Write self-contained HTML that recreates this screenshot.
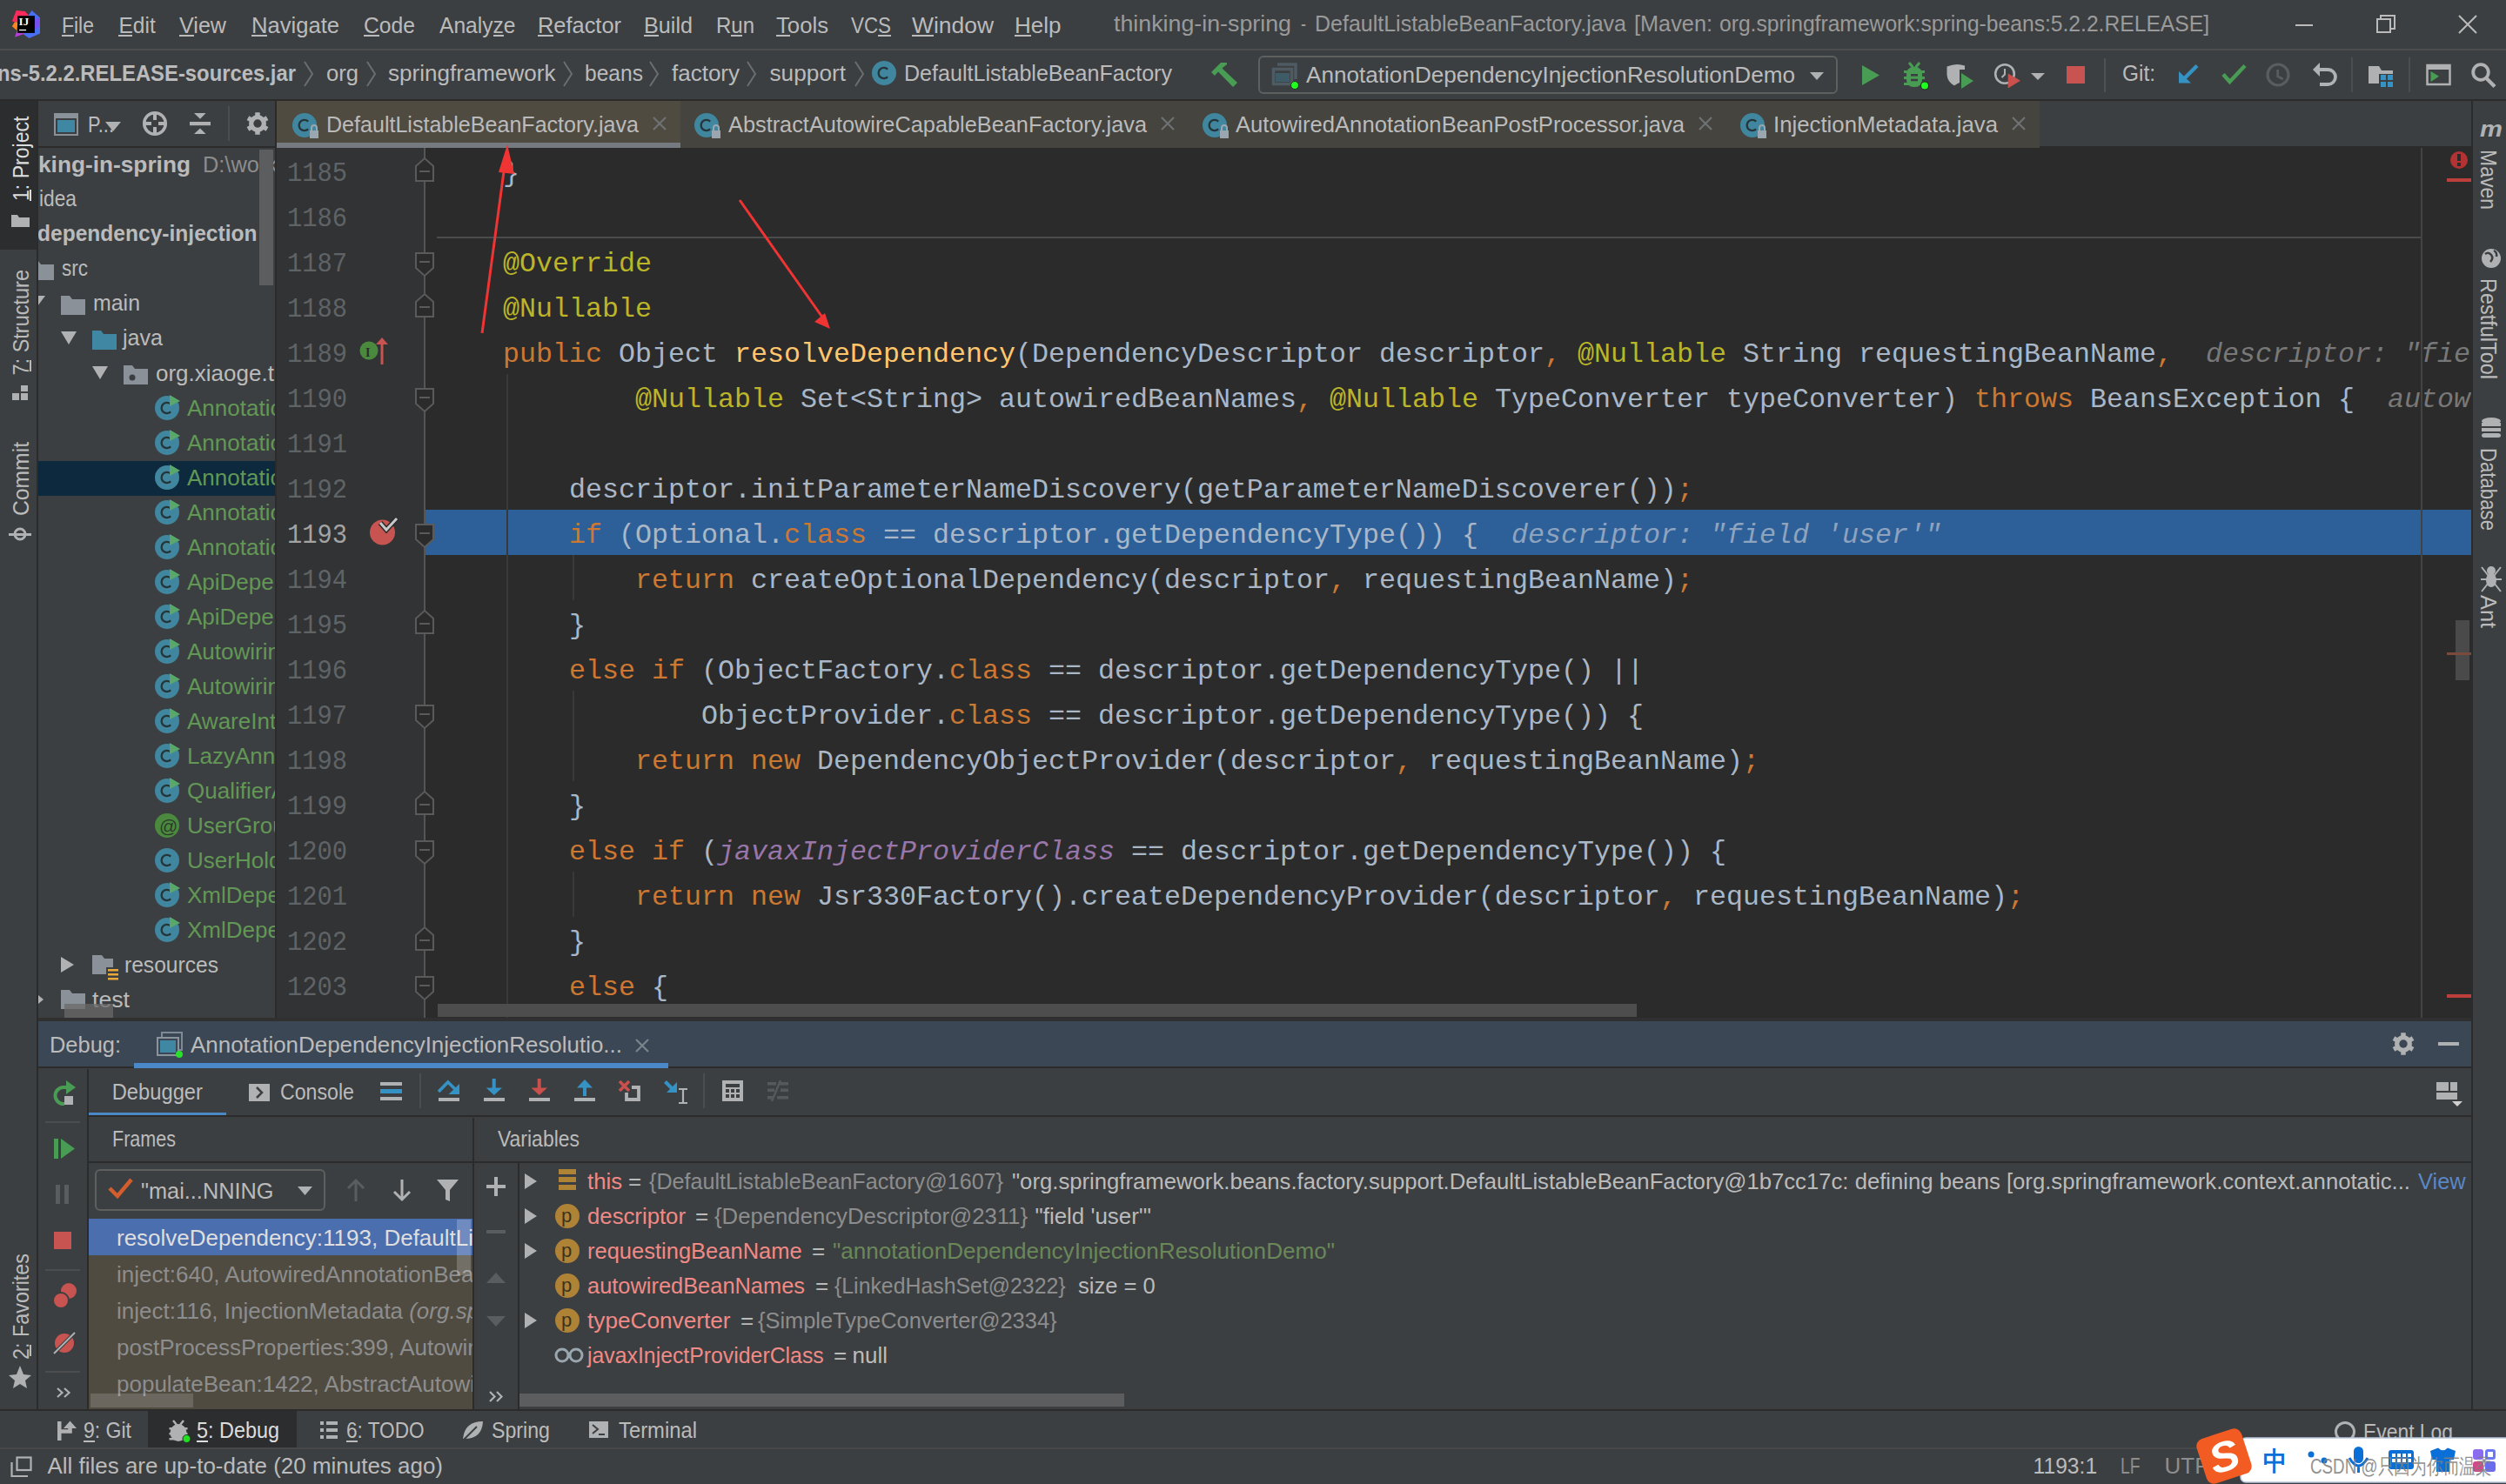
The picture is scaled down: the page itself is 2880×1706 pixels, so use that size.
<!DOCTYPE html>
<html><head><meta charset="utf-8"><style>
html,body{margin:0;padding:0;background:#3c3f41;overflow:hidden}
svg{display:block}
text{white-space:pre}
</style></head><body>
<svg width="2880" height="1706" viewBox="0 0 2880 1706" font-family="Liberation Sans, sans-serif">
<rect x="0" y="0" width="2880" height="1706" fill="#3c3f41" />
<line x1="0" y1="57" x2="2880" y2="57" stroke="#4b4d4f" stroke-width="2" />
<g>
<polygon points="18.7,11.9 28.8,13 33.2,17.9 19.9,25.6 13.9,24.4" fill="#fe2a5c"/>
<polygon points="13.9,30.3 16.9,25.3 20.5,25.6 19.3,35.1" fill="#fc851d"/>
<polygon points="16.9,42.8 19.9,34.2 29,38.6" fill="#b73fd9"/>
<polygon points="36.5,11.9 46,20.2 46,38.6 33.5,44 27,39.5 32.9,17.3" fill="#4a6ef0"/>
<polygon points="39,22 46,20.2 46,30 40,34" fill="#7650ee"/>
<rect x="20.2" y="18.2" width="19.7" height="19.7" fill="#000"/>
<text x="21.6" y="28.8" font-size="12" font-weight="bold" font-family="Liberation Serif" fill="#fff" textLength="11.6" lengthAdjust="spacingAndGlyphs">IJ</text>
<rect x="22.1" y="33.9" width="8" height="1.3" fill="#fff"/>
</g>
<text x="71" y="38" font-size="26" fill="#bbbbbb" textLength="37" lengthAdjust="spacingAndGlyphs" >File</text>
<rect x="71" y="40" width="14" height="2" fill="#bbbbbb" />
<text x="136.5" y="38" font-size="26" fill="#bbbbbb" textLength="42.2" lengthAdjust="spacingAndGlyphs" >Edit</text>
<rect x="136" y="40" width="16" height="2" fill="#bbbbbb" />
<text x="206" y="38" font-size="26" fill="#bbbbbb" textLength="54" lengthAdjust="spacingAndGlyphs" >View</text>
<rect x="206" y="40" width="17" height="2" fill="#bbbbbb" />
<text x="289" y="38" font-size="26" fill="#bbbbbb" textLength="101" lengthAdjust="spacingAndGlyphs" >Navigate</text>
<rect x="289" y="40" width="18" height="2" fill="#bbbbbb" />
<text x="418" y="38" font-size="26" fill="#bbbbbb" textLength="59" lengthAdjust="spacingAndGlyphs" >Code</text>
<rect x="418" y="40" width="18" height="2" fill="#bbbbbb" />
<text x="505" y="38" font-size="26" fill="#bbbbbb" textLength="87.5" lengthAdjust="spacingAndGlyphs" >Analyze</text>
<rect x="567" y="40" width="12" height="2" fill="#bbbbbb" />
<text x="618" y="38" font-size="26" fill="#bbbbbb" textLength="96" lengthAdjust="spacingAndGlyphs" >Refactor</text>
<rect x="618" y="40" width="18" height="2" fill="#bbbbbb" />
<text x="740" y="38" font-size="26" fill="#bbbbbb" textLength="56" lengthAdjust="spacingAndGlyphs" >Build</text>
<rect x="740" y="40" width="17" height="2" fill="#bbbbbb" />
<text x="823" y="38" font-size="26" fill="#bbbbbb" textLength="44" lengthAdjust="spacingAndGlyphs" >Run</text>
<rect x="840" y="40" width="13" height="2" fill="#bbbbbb" />
<text x="892" y="38" font-size="26" fill="#bbbbbb" textLength="60" lengthAdjust="spacingAndGlyphs" >Tools</text>
<rect x="892" y="40" width="16" height="2" fill="#bbbbbb" />
<text x="978" y="38" font-size="26" fill="#bbbbbb" textLength="46" lengthAdjust="spacingAndGlyphs" >VCS</text>
<rect x="1009" y="40" width="15" height="2" fill="#bbbbbb" />
<text x="1048" y="38" font-size="26" fill="#bbbbbb" textLength="94" lengthAdjust="spacingAndGlyphs" >Window</text>
<rect x="1048" y="40" width="25" height="2" fill="#bbbbbb" />
<text x="1166" y="38" font-size="26" fill="#bbbbbb" textLength="53.5" lengthAdjust="spacingAndGlyphs" >Help</text>
<rect x="1166" y="40" width="19" height="2" fill="#bbbbbb" />
<text x="1280" y="36" font-size="26" fill="#9a9a9a" textLength="204" lengthAdjust="spacingAndGlyphs" >thinking-in-spring</text>
<text x="1495" y="36" font-size="26" fill="#9a9a9a" textLength="6" lengthAdjust="spacingAndGlyphs" >-</text>
<text x="1511" y="36" font-size="26" fill="#9a9a9a" textLength="358" lengthAdjust="spacingAndGlyphs" >DefaultListableBeanFactory.java</text>
<text x="1878" y="36" font-size="26" fill="#9a9a9a" textLength="90" lengthAdjust="spacingAndGlyphs" >[Maven:</text>
<text x="1976" y="36" font-size="26" fill="#9a9a9a" textLength="563" lengthAdjust="spacingAndGlyphs" >org.springframework:spring-beans:5.2.2.RELEASE]</text>
<rect x="2638" y="28" width="20" height="2" fill="#bbbbbb" />
<rect x="2732" y="22" width="15" height="15" fill="none" stroke="#bbbbbb" stroke-width="2"/><path d="M2736,22 V18 H2752 V33 H2747" fill="none" stroke="#bbbbbb" stroke-width="2"/>
<path d="M2826,18 L2846,38 M2846,18 L2826,38" stroke="#bbbbbb" stroke-width="2"/>
<rect x="0" y="114" width="2880" height="2" fill="#2b2b2b" />
<text x="-3" y="93" font-size="26" fill="#bbbbbb" textLength="343" lengthAdjust="spacingAndGlyphs" font-weight="bold" >ns-5.2.2.RELEASE-sources.jar</text>
<path d="M350,71 L359,85 L350,99" fill="none" stroke="#6b6d6f" stroke-width="2"/>
<path d="M422,71 L431,85 L422,99" fill="none" stroke="#6b6d6f" stroke-width="2"/>
<path d="M648,71 L657,85 L648,99" fill="none" stroke="#6b6d6f" stroke-width="2"/>
<path d="M747,71 L756,85 L747,99" fill="none" stroke="#6b6d6f" stroke-width="2"/>
<path d="M859,71 L868,85 L859,99" fill="none" stroke="#6b6d6f" stroke-width="2"/>
<path d="M983,71 L992,85 L983,99" fill="none" stroke="#6b6d6f" stroke-width="2"/>
<text x="375" y="93" font-size="26" fill="#bbbbbb" textLength="37" lengthAdjust="spacingAndGlyphs" >org</text>
<text x="446" y="93" font-size="26" fill="#bbbbbb" textLength="192.5" lengthAdjust="spacingAndGlyphs" >springframework</text>
<text x="672" y="93" font-size="26" fill="#bbbbbb" textLength="67" lengthAdjust="spacingAndGlyphs" >beans</text>
<text x="772" y="93" font-size="26" fill="#bbbbbb" textLength="78" lengthAdjust="spacingAndGlyphs" >factory</text>
<text x="884.5" y="93" font-size="26" fill="#bbbbbb" textLength="87.5" lengthAdjust="spacingAndGlyphs" >support</text>
<circle cx="1016" cy="84" r="14" fill="#40869e"/>
<path d="M1020.2,79.6 A6.2,6.2 0 1 0 1020.2,88.4" fill="none" stroke="#26353a" stroke-width="2.3"/>
<text x="1039" y="93" font-size="26" fill="#bbbbbb" textLength="308" lengthAdjust="spacingAndGlyphs" >DefaultListableBeanFactory</text>
<polygon points="1392,83 1403,72 1410,72 1410,74 1404.5,78.5 1422,95 1417,100 1400,82.5 1396,87" fill="#499c54"/>
<rect x="1447" y="65" width="664" height="42" rx="5" fill="#3c3f41" stroke="#5e6060" stroke-width="2"/>
<path d="M1468,74 H1489 V91" fill="none" stroke="#4f5b62" stroke-width="3.5"/><rect x="1463.5" y="79.5" width="21" height="17" fill="none" stroke="#4f5b62" stroke-width="3.5"/><rect x="1466" y="84" width="16" height="10" fill="#3e5c68"/><circle cx="1488" cy="98" r="4.5" fill="#20ff20" stroke="#2b2b2b" stroke-width="1"/>
<text x="1501" y="95" font-size="26" fill="#bbbbbb" textLength="562" lengthAdjust="spacingAndGlyphs" >AnnotationDependencyInjectionResolutionDemo</text>
<polygon points="2080,83 2096,83 2088,92" fill="#aeb0b2"/>
<polygon points="2140,75 2160,86.5 2140,98" fill="#499c54"/>
<g fill="#499c54"><rect x="2191" y="77" width="18" height="23" rx="8"/><rect x="2188" y="81" width="24" height="3"/><rect x="2188" y="88" width="24" height="3"/><rect x="2188" y="95" width="24" height="3"/></g><g fill="#3c3f41"><rect x="2196" y="85" width="8" height="2.6"/><rect x="2196" y="90.7" width="8" height="2.6"/></g><path d="M2194,72 L2198.5,77.5 M2206,72 L2201.5,77.5" stroke="#499c54" stroke-width="3"/><circle cx="2212" cy="98.4" r="4.6" fill="#20ff20" stroke="#262626" stroke-width="1.2"/>
<path d="M2237.5,76.5 Q2248,72 2258,75.5 V80 H2252 V95 Q2246,98 2246,98.5 Q2238,94 2237.5,86 Z" fill="#afb1b3"/><polygon points="2254,84 2268,93 2254,102" fill="#499c54"/>
<circle cx="2304" cy="85" r="10.8" fill="none" stroke="#afb1b3" stroke-width="2.6"/><path d="M2304,79 V85.5 L2300.5,89" fill="none" stroke="#afb1b3" stroke-width="2"/><polygon points="2307.7,84.4 2322,92.8 2307.7,101.6" fill="#c9504c"/><polygon points="2334,84 2350,84 2342,92" fill="#afb1b3"/>
<rect x="2375" y="76" width="21" height="20" fill="#c75450" />
<rect x="2418" y="67" width="2" height="39" fill="#515151" />
<text x="2439" y="93" font-size="26" fill="#bbbbbb" textLength="38" lengthAdjust="spacingAndGlyphs" >Git:</text>
<path d="M2525,75.5 L2509,91.5" stroke="#3592c4" stroke-width="4.5"/><polygon points="2504,82 2504,95.5 2518,95.5" fill="#3592c4"/>
<path d="M2555,85.5 L2562.5,94 L2580,75.5" fill="none" stroke="#499c54" stroke-width="4.5"/>
<circle cx="2618" cy="86" r="12" fill="none" stroke="#5a5d5f" stroke-width="3.2"/><path d="M2617.6,80 V87.7 L2623.8,91" fill="none" stroke="#5a5d5f" stroke-width="2.6"/>
<path d="M2665,80 H2675.5 A8.5,8.5 0 0 1 2675.5,97 H2666" fill="none" stroke="#afb1b3" stroke-width="3.8"/><polygon points="2658,80 2666,72 2666,88" fill="#afb1b3"/>
<rect x="2702" y="66" width="2" height="40" fill="#4b4d4f" />
<path d="M2722,76 H2734 L2737,81 H2750 V96 H2722 Z" fill="#afb1b3"/><rect x="2734" y="85" width="17" height="16" fill="#3c3f41"/><g fill="#3592c4"><rect x="2736" y="86" width="6" height="6"/><rect x="2744" y="86" width="6" height="6"/><rect x="2736" y="94" width="6" height="6"/><rect x="2744" y="94" width="6" height="6"/></g>
<rect x="2768" y="66" width="2" height="40" fill="#4b4d4f" />
<rect x="2789.5" y="75" width="26" height="22" fill="none" stroke="#afb1b3" stroke-width="2.5"/><rect x="2789" y="74" width="27" height="6" fill="#afb1b3"/><polygon points="2793.5,82 2803,87.7 2793.5,94" fill="#499c54"/>
<circle cx="2851" cy="83" r="8.8" fill="none" stroke="#afb1b3" stroke-width="3.8"/><path d="M2857,89.5 L2867,99.5" stroke="#afb1b3" stroke-width="4.2"/>
<rect x="0" y="116" width="42" height="1504" fill="#3c3f41" />
<rect x="0" y="116" width="42" height="171" fill="#2b2d2f" />
<rect x="42" y="116" width="2" height="1504" fill="#2b2b2b" />
<text x="0" y="0" font-size="26" fill="#dddddd" textLength="97.5" lengthAdjust="spacingAndGlyphs" transform="translate(33,231) rotate(-90)">1: Project</text>
<rect x="34" y="218" width="2" height="13" fill="#dddddd" />
<path d="M13,247 H20 L22,250 H34 V261 H13 Z" fill="#afb1b3"/>
<text x="0" y="0" font-size="26" fill="#bbbbbb" textLength="121.5" lengthAdjust="spacingAndGlyphs" transform="translate(33,431.5) rotate(-90)">7: Structure</text>
<rect x="34" y="414" width="2" height="13" fill="#bbbbbb" />
<rect x="14" y="452" width="8" height="8" fill="#afb1b3"/><rect x="24" y="452" width="8" height="8" fill="#afb1b3"/><rect x="24" y="443" width="8" height="7" fill="#afb1b3"/>
<text x="0" y="0" font-size="26" fill="#bbbbbb" textLength="85" lengthAdjust="spacingAndGlyphs" transform="translate(33,593) rotate(-90)">Commit</text>
<circle cx="23" cy="614" r="6" fill="none" stroke="#afb1b3" stroke-width="3"/><rect x="10" y="613" width="26" height="3" fill="#afb1b3"/>
<text x="0" y="0" font-size="26" fill="#bbbbbb" textLength="122" lengthAdjust="spacingAndGlyphs" transform="translate(33,1563) rotate(-90)">2: Favorites</text>
<rect x="34" y="1546" width="2" height="13" fill="#bbbbbb" />
<polygon points="23,1570 27,1580 36,1581 29,1587 31,1596 23,1591 15,1596 17,1587 10,1581 19,1580" fill="#afb1b3"/>
<rect x="44" y="168" width="273" height="2" fill="#2b2b2b" />
<rect x="62" y="130" width="28" height="26" fill="#8a9199"/><rect x="64" y="136" width="24" height="18" fill="#3c3f41"/><rect x="66" y="138" width="20" height="14" fill="#3f87a3"/>
<text x="101" y="152" font-size="26" fill="#bbbbbb" textLength="30" lengthAdjust="spacingAndGlyphs" >P...</text>
<polygon points="121,140 139,140 130,151" fill="#afb1b3"/>
<circle cx="178" cy="142" r="12.3" fill="none" stroke="#afb1b3" stroke-width="3.5"/><path d="M178,130 V138 M178,146 V154 M166,142 H174 M182,142 H190" stroke="#afb1b3" stroke-width="4"/>
<polygon points="223,130 236.6,130 230,136.7" fill="#afb1b3"/><rect x="218" y="140" width="24" height="4.2" fill="#afb1b3"/><polygon points="223,154 236.6,154 230,147.5" fill="#afb1b3"/>
<rect x="262" y="122" width="2" height="40" fill="#4b4d4f" />
<polygon points="293.2,132.5 293.3,129.3 298.7,129.3 298.8,132.5 300.0,133.0 300.9,133.4 301.8,134.0 302.8,134.9 305.7,133.3 308.4,138.0 305.6,139.6 305.8,141.0 305.9,142.0 305.8,143.0 305.6,144.4 308.4,146.0 305.7,150.7 302.8,149.1 301.8,150.0 300.9,150.6 300.0,151.0 298.8,151.5 298.7,154.7 293.3,154.7 293.2,151.5 292.0,151.0 291.1,150.6 290.2,150.0 289.2,149.1 286.3,150.7 283.6,146.0 286.4,144.4 286.2,143.0 286.1,142.0 286.2,141.0 286.4,139.6 283.6,138.0 286.3,133.3 289.2,134.9 290.2,134.0 291.1,133.4 292.0,133.0" fill="#afb1b3"/><circle cx="296" cy="142" r="4.7" fill="#3c3f41"/>
<defs><clipPath id="projclip"><rect x="44" y="170" width="272" height="1001"/></clipPath></defs>
<g clip-path="url(#projclip)">
<rect x="44" y="530" width="272" height="40" fill="#0d293e" />
<text x="44" y="198" font-size="26" fill="#bbbbbb" textLength="175" lengthAdjust="spacingAndGlyphs" font-weight="bold" >king-in-spring</text>
<text x="233" y="198" font-size="26" fill="#8c8c8c" textLength="86" lengthAdjust="spacingAndGlyphs" >D:\work</text>
<rect x="38" y="219" width="6" height="18" fill="#c9803a"/>
<text x="45" y="237" font-size="26" fill="#bbbbbb" textLength="43" lengthAdjust="spacingAndGlyphs" >idea</text>
<text x="43" y="277" font-size="26" fill="#bbbbbb" textLength="252.5" lengthAdjust="spacingAndGlyphs" font-weight="bold" >dependency-injection</text>
<path d="M34,300 H44 L47,304 H62 V322 H34 Z" fill="#8a9199"/>
<text x="71" y="317" font-size="26" fill="#bbbbbb" textLength="30" lengthAdjust="spacingAndGlyphs" >src</text>
<polygon points="43,340 52,340 43,352" fill="#afb1b3"/>
<path d="M70,340 H80 L83,344 H98 V362 H70 Z" fill="#8a9199"/>
<text x="107" y="357" font-size="26" fill="#bbbbbb" textLength="54" lengthAdjust="spacingAndGlyphs" >main</text>
<polygon points="70,381 88,381 79,396" fill="#afb1b3"/>
<path d="M106,380 H116 L119,384 H134 V402 H106 Z" fill="#3f87a3"/>
<text x="141" y="397" font-size="26" fill="#bbbbbb" textLength="46" lengthAdjust="spacingAndGlyphs" >java</text>
<polygon points="106,421 124,421 115,436" fill="#afb1b3"/>
<path d="M142,420 H152 L155,424 H170 V442 H142 Z" fill="#8a9199"/>
<circle cx="152" cy="434" r="3.5" fill="#3c3f41"/>
<text x="179" y="438" font-size="26" fill="#bbbbbb" >org.xiaoge.thinking.in.spring</text>
<circle cx="192" cy="469" r="14" fill="#40869e"/>
<path d="M196.2,464.6 A6.2,6.2 0 1 0 196.2,473.4" fill="none" stroke="#26353a" stroke-width="2.3"/>
<polygon points="195,454 207,461 195,467" fill="#59a869"/>
<text x="215" y="478" font-size="26" fill="#629755" >AnnotationDependencyConstructorInjectionDemo</text>
<circle cx="192" cy="509" r="14" fill="#40869e"/>
<path d="M196.2,504.6 A6.2,6.2 0 1 0 196.2,513.4" fill="none" stroke="#26353a" stroke-width="2.3"/>
<polygon points="195,494 207,501 195,507" fill="#59a869"/>
<text x="215" y="518" font-size="26" fill="#629755" >AnnotationDependencyFieldInjectionDemo</text>
<circle cx="192" cy="549" r="14" fill="#40869e"/>
<path d="M196.2,544.6 A6.2,6.2 0 1 0 196.2,553.4" fill="none" stroke="#26353a" stroke-width="2.3"/>
<polygon points="195,534 207,541 195,547" fill="#59a869"/>
<text x="215" y="558" font-size="26" fill="#629755" >AnnotationDependencyInjectionResolutionDemo</text>
<circle cx="192" cy="589" r="14" fill="#40869e"/>
<path d="M196.2,584.6 A6.2,6.2 0 1 0 196.2,593.4" fill="none" stroke="#26353a" stroke-width="2.3"/>
<polygon points="195,574 207,581 195,587" fill="#59a869"/>
<text x="215" y="598" font-size="26" fill="#629755" >AnnotationDependencyMethodInjectionDemo</text>
<circle cx="192" cy="629" r="14" fill="#40869e"/>
<path d="M196.2,624.6 A6.2,6.2 0 1 0 196.2,633.4" fill="none" stroke="#26353a" stroke-width="2.3"/>
<polygon points="195,614 207,621 195,627" fill="#59a869"/>
<text x="215" y="638" font-size="26" fill="#629755" >AnnotationDependencySetterInjectionDemo</text>
<circle cx="192" cy="669" r="14" fill="#40869e"/>
<path d="M196.2,664.6 A6.2,6.2 0 1 0 196.2,673.4" fill="none" stroke="#26353a" stroke-width="2.3"/>
<polygon points="195,654 207,661 195,667" fill="#59a869"/>
<text x="215" y="678" font-size="26" fill="#629755" >ApiDependencyConstructorInjectionDemo</text>
<circle cx="192" cy="709" r="14" fill="#40869e"/>
<path d="M196.2,704.6 A6.2,6.2 0 1 0 196.2,713.4" fill="none" stroke="#26353a" stroke-width="2.3"/>
<polygon points="195,694 207,701 195,707" fill="#59a869"/>
<text x="215" y="718" font-size="26" fill="#629755" >ApiDependencySetterInjectionDemo</text>
<circle cx="192" cy="749" r="14" fill="#40869e"/>
<path d="M196.2,744.6 A6.2,6.2 0 1 0 196.2,753.4" fill="none" stroke="#26353a" stroke-width="2.3"/>
<polygon points="195,734 207,741 195,747" fill="#59a869"/>
<text x="215" y="758" font-size="26" fill="#629755" >AutowiringByNameDependencySetterInjectionDemo</text>
<circle cx="192" cy="789" r="14" fill="#40869e"/>
<path d="M196.2,784.6 A6.2,6.2 0 1 0 196.2,793.4" fill="none" stroke="#26353a" stroke-width="2.3"/>
<polygon points="195,774 207,781 195,787" fill="#59a869"/>
<text x="215" y="798" font-size="26" fill="#629755" >AutowiringConstructorDependencyConstructorInjectionDemo</text>
<circle cx="192" cy="829" r="14" fill="#40869e"/>
<path d="M196.2,824.6 A6.2,6.2 0 1 0 196.2,833.4" fill="none" stroke="#26353a" stroke-width="2.3"/>
<polygon points="195,814 207,821 195,827" fill="#59a869"/>
<text x="215" y="838" font-size="26" fill="#629755" >AwareInterfaceDependencyInjectionDemo</text>
<circle cx="192" cy="869" r="14" fill="#40869e"/>
<path d="M196.2,864.6 A6.2,6.2 0 1 0 196.2,873.4" fill="none" stroke="#26353a" stroke-width="2.3"/>
<polygon points="195,854 207,861 195,867" fill="#59a869"/>
<text x="215" y="878" font-size="26" fill="#629755" >LazyAnnotationDependencyInjectionDemo</text>
<circle cx="192" cy="909" r="14" fill="#40869e"/>
<path d="M196.2,904.6 A6.2,6.2 0 1 0 196.2,913.4" fill="none" stroke="#26353a" stroke-width="2.3"/>
<polygon points="195,894 207,901 195,907" fill="#59a869"/>
<text x="215" y="918" font-size="26" fill="#629755" >QualifierAnnotationDependencyInjectionDemo</text>
<circle cx="192" cy="949" r="14" fill="#4b8a3e"/><text x="183" y="957" font-size="21" fill="#2b3a2b">@</text>
<text x="215" y="958" font-size="26" fill="#629755" >UserGroup</text>
<circle cx="192" cy="989" r="14" fill="#40869e"/>
<path d="M196.2,984.6 A6.2,6.2 0 1 0 196.2,993.4" fill="none" stroke="#26353a" stroke-width="2.3"/>
<text x="215" y="998" font-size="26" fill="#629755" >UserHolder</text>
<circle cx="192" cy="1029" r="14" fill="#40869e"/>
<path d="M196.2,1024.6 A6.2,6.2 0 1 0 196.2,1033.4" fill="none" stroke="#26353a" stroke-width="2.3"/>
<polygon points="195,1014 207,1021 195,1027" fill="#59a869"/>
<text x="215" y="1038" font-size="26" fill="#629755" >XmlDependencyConstructorInjectionDemo</text>
<circle cx="192" cy="1069" r="14" fill="#40869e"/>
<path d="M196.2,1064.6 A6.2,6.2 0 1 0 196.2,1073.4" fill="none" stroke="#26353a" stroke-width="2.3"/>
<polygon points="195,1054 207,1061 195,1067" fill="#59a869"/>
<text x="215" y="1078" font-size="26" fill="#629755" >XmlDependencySetterInjectionDemo</text>
<polygon points="70,1100 85,1109 70,1118" fill="#afb1b3"/>
<path d="M106,1098 H117 L120,1102 H130 V1120 H106 Z" fill="#8a9199"/><rect x="122" y="1112" width="14" height="17" fill="#3c3f41"/><g fill="#e8a83a"><rect x="124" y="1114" width="12" height="2.5"/><rect x="124" y="1119" width="12" height="2.5"/><rect x="124" y="1124" width="12" height="2.5"/></g>
<text x="143" y="1118" font-size="26" fill="#bbbbbb" textLength="108" lengthAdjust="spacingAndGlyphs" >resources</text>
<polygon points="44,1144 50,1149 44,1154" fill="#afb1b3"/>
<path d="M70,1138 H80 L83,1142 H98 V1160 H70 Z" fill="#8a9199"/>
<text x="106" y="1158" font-size="26" fill="#bbbbbb" textLength="43" lengthAdjust="spacingAndGlyphs" >test</text>
<rect x="74" y="1154" width="56" height="16" fill="#6a6a6a" opacity="0.75"/>
<rect x="298" y="172" width="16" height="156" fill="#5b5d5f" />
</g>
<rect x="44" y="1170" width="273" height="1.5" fill="#4b473c" />
<rect x="316" y="116" width="2" height="1056" fill="#2b2b2b" />
<rect x="318" y="116" width="2026" height="54" fill="#45443e" />
<rect x="318" y="116" width="464" height="54" fill="#4f4b41" />
<rect x="318" y="164" width="464" height="6" fill="#747a80" />
<rect x="2344" y="116" width="496" height="52" fill="#3c3f41" />
<rect x="2344" y="168" width="496" height="2" fill="#2b2b2b" />
<circle cx="350" cy="144" r="14" fill="#40869e"/>
<path d="M354.2,139.6 A6.2,6.2 0 1 0 354.2,148.4" fill="none" stroke="#26353a" stroke-width="2.3"/>
<rect x="356" y="150" width="10" height="9" fill="#9aa7b0"/><path d="M358,151 v-4 a3,3 0 0 1 6,0 v4" fill="none" stroke="#9aa7b0" stroke-width="2"/>
<text x="375" y="152" font-size="26" fill="#bbbbbb" textLength="359" lengthAdjust="spacingAndGlyphs" >DefaultListableBeanFactory.java</text>
<path d="M751,135 L765,149 M765,135 L751,149" stroke="#6e7274" stroke-width="2.2"/>
<circle cx="812" cy="144" r="14" fill="#40869e"/>
<path d="M816.2,139.6 A6.2,6.2 0 1 0 816.2,148.4" fill="none" stroke="#26353a" stroke-width="2.3"/>
<rect x="818" y="150" width="10" height="9" fill="#9aa7b0"/><path d="M820,151 v-4 a3,3 0 0 1 6,0 v4" fill="none" stroke="#9aa7b0" stroke-width="2"/>
<text x="837" y="152" font-size="26" fill="#bbbbbb" textLength="481" lengthAdjust="spacingAndGlyphs" >AbstractAutowireCapableBeanFactory.java</text>
<path d="M1335,135 L1349,149 M1349,135 L1335,149" stroke="#6e7274" stroke-width="2.2"/>
<circle cx="1396" cy="144" r="14" fill="#40869e"/>
<path d="M1400.2,139.6 A6.2,6.2 0 1 0 1400.2,148.4" fill="none" stroke="#26353a" stroke-width="2.3"/>
<rect x="1402" y="150" width="10" height="9" fill="#9aa7b0"/><path d="M1404,151 v-4 a3,3 0 0 1 6,0 v4" fill="none" stroke="#9aa7b0" stroke-width="2"/>
<text x="1420" y="152" font-size="26" fill="#bbbbbb" textLength="516" lengthAdjust="spacingAndGlyphs" >AutowiredAnnotationBeanPostProcessor.java</text>
<path d="M1953,135 L1967,149 M1967,135 L1953,149" stroke="#6e7274" stroke-width="2.2"/>
<circle cx="2014" cy="144" r="14" fill="#40869e"/>
<path d="M2018.2,139.6 A6.2,6.2 0 1 0 2018.2,148.4" fill="none" stroke="#26353a" stroke-width="2.3"/>
<rect x="2020" y="150" width="10" height="9" fill="#9aa7b0"/><path d="M2022,151 v-4 a3,3 0 0 1 6,0 v4" fill="none" stroke="#9aa7b0" stroke-width="2"/>
<text x="2038" y="152" font-size="26" fill="#bbbbbb" textLength="258" lengthAdjust="spacingAndGlyphs" >InjectionMetadata.java</text>
<path d="M2313,135 L2327,149 M2327,135 L2313,149" stroke="#6e7274" stroke-width="2.2"/>
<rect x="318" y="170" width="170" height="1001" fill="#313335" />
<rect x="488" y="170" width="2352" height="1001" fill="#2b2b2b" />
<rect x="489" y="586" width="2351" height="52" fill="#2d5f99" />
<rect x="502" y="272" width="2281" height="2" fill="#4b4b4b" />
<rect x="2782" y="170" width="2" height="1001" fill="#434343" />
<rect x="582" y="430" width="2" height="741" fill="#393939" />
<rect x="658" y="638" width="2" height="52" fill="#393939" />
<rect x="658" y="794" width="2" height="104" fill="#393939" />
<rect x="658" y="1002" width="2" height="52" fill="#393939" />
<rect x="487" y="170" width="2" height="1001" fill="#555555" />
<text x="330" y="208" font-size="31.66" fill="#606366" font-family="Liberation Mono" textLength="69" lengthAdjust="spacingAndGlyphs" >1185</text>
<text x="330" y="260" font-size="31.66" fill="#606366" font-family="Liberation Mono" textLength="69" lengthAdjust="spacingAndGlyphs" >1186</text>
<text x="330" y="312" font-size="31.66" fill="#606366" font-family="Liberation Mono" textLength="69" lengthAdjust="spacingAndGlyphs" >1187</text>
<text x="330" y="364" font-size="31.66" fill="#606366" font-family="Liberation Mono" textLength="69" lengthAdjust="spacingAndGlyphs" >1188</text>
<text x="330" y="416" font-size="31.66" fill="#606366" font-family="Liberation Mono" textLength="69" lengthAdjust="spacingAndGlyphs" >1189</text>
<text x="330" y="468" font-size="31.66" fill="#606366" font-family="Liberation Mono" textLength="69" lengthAdjust="spacingAndGlyphs" >1190</text>
<text x="330" y="520" font-size="31.66" fill="#606366" font-family="Liberation Mono" textLength="69" lengthAdjust="spacingAndGlyphs" >1191</text>
<text x="330" y="572" font-size="31.66" fill="#606366" font-family="Liberation Mono" textLength="69" lengthAdjust="spacingAndGlyphs" >1192</text>
<text x="330" y="624" font-size="31.66" fill="#a4a3a3" font-family="Liberation Mono" textLength="69" lengthAdjust="spacingAndGlyphs" >1193</text>
<text x="330" y="676" font-size="31.66" fill="#606366" font-family="Liberation Mono" textLength="69" lengthAdjust="spacingAndGlyphs" >1194</text>
<text x="330" y="728" font-size="31.66" fill="#606366" font-family="Liberation Mono" textLength="69" lengthAdjust="spacingAndGlyphs" >1195</text>
<text x="330" y="780" font-size="31.66" fill="#606366" font-family="Liberation Mono" textLength="69" lengthAdjust="spacingAndGlyphs" >1196</text>
<text x="330" y="832" font-size="31.66" fill="#606366" font-family="Liberation Mono" textLength="69" lengthAdjust="spacingAndGlyphs" >1197</text>
<text x="330" y="884" font-size="31.66" fill="#606366" font-family="Liberation Mono" textLength="69" lengthAdjust="spacingAndGlyphs" >1198</text>
<text x="330" y="936" font-size="31.66" fill="#606366" font-family="Liberation Mono" textLength="69" lengthAdjust="spacingAndGlyphs" >1199</text>
<text x="330" y="988" font-size="31.66" fill="#606366" font-family="Liberation Mono" textLength="69" lengthAdjust="spacingAndGlyphs" >1200</text>
<text x="330" y="1040" font-size="31.66" fill="#606366" font-family="Liberation Mono" textLength="69" lengthAdjust="spacingAndGlyphs" >1201</text>
<text x="330" y="1092" font-size="31.66" fill="#606366" font-family="Liberation Mono" textLength="69" lengthAdjust="spacingAndGlyphs" >1202</text>
<text x="330" y="1144" font-size="31.66" fill="#606366" font-family="Liberation Mono" textLength="69" lengthAdjust="spacingAndGlyphs" >1203</text>
<path d="M478,208 V191 L488,182 L498,191 V208 Z" fill="#2b2b2b" stroke="#5a5a5a" stroke-width="2"/><rect x="482" y="196" width="12" height="2" fill="#5a5a5a"/>
<path d="M478,364 V347 L488,338 L498,347 V364 Z" fill="#2b2b2b" stroke="#5a5a5a" stroke-width="2"/><rect x="482" y="352" width="12" height="2" fill="#5a5a5a"/>
<path d="M478,728 V711 L488,702 L498,711 V728 Z" fill="#2b2b2b" stroke="#5a5a5a" stroke-width="2"/><rect x="482" y="716" width="12" height="2" fill="#5a5a5a"/>
<path d="M478,936 V919 L488,910 L498,919 V936 Z" fill="#2b2b2b" stroke="#5a5a5a" stroke-width="2"/><rect x="482" y="924" width="12" height="2" fill="#5a5a5a"/>
<path d="M478,1092 V1075 L488,1066 L498,1075 V1092 Z" fill="#2b2b2b" stroke="#5a5a5a" stroke-width="2"/><rect x="482" y="1080" width="12" height="2" fill="#5a5a5a"/>
<path d="M478,291 V308 L488,317 L498,308 V291 Z" fill="#2b2b2b" stroke="#5a5a5a" stroke-width="2"/><rect x="482" y="300" width="12" height="2" fill="#5a5a5a"/>
<path d="M478,447 V464 L488,473 L498,464 V447 Z" fill="#2b2b2b" stroke="#5a5a5a" stroke-width="2"/><rect x="482" y="456" width="12" height="2" fill="#5a5a5a"/>
<path d="M478,603 V620 L488,629 L498,620 V603 Z" fill="#2b2b2b" stroke="#5a5a5a" stroke-width="2"/><rect x="482" y="612" width="12" height="2" fill="#5a5a5a"/>
<path d="M478,811 V828 L488,837 L498,828 V811 Z" fill="#2b2b2b" stroke="#5a5a5a" stroke-width="2"/><rect x="482" y="820" width="12" height="2" fill="#5a5a5a"/>
<path d="M478,967 V984 L488,993 L498,984 V967 Z" fill="#2b2b2b" stroke="#5a5a5a" stroke-width="2"/><rect x="482" y="976" width="12" height="2" fill="#5a5a5a"/>
<path d="M478,1123 V1140 L488,1149 L498,1140 V1123 Z" fill="#2b2b2b" stroke="#5a5a5a" stroke-width="2"/><rect x="482" y="1132" width="12" height="2" fill="#5a5a5a"/>
<circle cx="424" cy="403" r="10.5" fill="#4b8a3e"/><text x="420" y="410" font-size="14" font-weight="bold" fill="#2b2b2b" font-family="Liberation Serif">I</text>
<path d="M439,419 V394" stroke="#c75450" stroke-width="3"/><polygon points="432,396 439,388 446,396" fill="#c75450"/>
<circle cx="439.5" cy="612" r="14.5" fill="#c75450"/><path d="M437,601 L444,609 L456,596" fill="none" stroke="#2b2b2b" stroke-width="6"/><path d="M437,601 L444,609 L456,596" fill="none" stroke="#c8c8c8" stroke-width="3"/>
<defs><clipPath id="edclip"><rect x="489" y="170" width="2351" height="1001"/></clipPath></defs>
<g clip-path="url(#edclip)" font-family="Liberation Mono" font-size="31.66">
<text x="578" y="208" fill="#a9b7c6" font-family="Liberation Mono">}</text>
<text x="578" y="312" fill="#bbb529" font-family="Liberation Mono">@Override</text>
<text x="578" y="364" fill="#bbb529" font-family="Liberation Mono">@Nullable</text>
<text x="578" y="416" fill="#cc7832" font-family="Liberation Mono">public </text>
<text x="711" y="416" fill="#a9b7c6" font-family="Liberation Mono">Object </text>
<text x="844" y="416" fill="#ffc66d" font-family="Liberation Mono">resolveDependency</text>
<text x="1167" y="416" fill="#a9b7c6" font-family="Liberation Mono">(DependencyDescriptor descriptor</text>
<text x="1775" y="416" fill="#cc7832" font-family="Liberation Mono">,</text>
<text x="1813" y="416" fill="#bbb529" font-family="Liberation Mono">@Nullable</text>
<text x="2003" y="416" fill="#a9b7c6" font-family="Liberation Mono">String requestingBeanName</text>
<text x="2478" y="416" fill="#cc7832" font-family="Liberation Mono">,</text>
<text x="2535" y="416" fill="#787878" font-style="italic" font-family="Liberation Mono">descriptor: &quot;fie</text>
<text x="730" y="468" fill="#bbb529" font-family="Liberation Mono">@Nullable</text>
<text x="920" y="468" fill="#a9b7c6" font-family="Liberation Mono">Set&lt;String&gt; autowiredBeanNames</text>
<text x="1490" y="468" fill="#cc7832" font-family="Liberation Mono">,</text>
<text x="1528" y="468" fill="#bbb529" font-family="Liberation Mono">@Nullable</text>
<text x="1718" y="468" fill="#a9b7c6" font-family="Liberation Mono">TypeConverter typeConverter) </text>
<text x="2269" y="468" fill="#cc7832" font-family="Liberation Mono">throws</text>
<text x="2402" y="468" fill="#a9b7c6" font-family="Liberation Mono">BeansException {</text>
<text x="2744" y="468" fill="#787878" font-style="italic" font-family="Liberation Mono">autow</text>
<text x="654" y="572" fill="#a9b7c6" font-family="Liberation Mono">descriptor.initParameterNameDiscovery(getParameterNameDiscoverer())</text>
<text x="1927" y="572" fill="#cc7832" font-family="Liberation Mono">;</text>
<text x="654" y="624" fill="#cc7832" font-family="Liberation Mono">if</text>
<text x="711" y="624" fill="#a9b7c6" font-family="Liberation Mono">(Optional.</text>
<text x="901" y="624" fill="#cc7832" font-family="Liberation Mono">class</text>
<text x="1015" y="624" fill="#a9b7c6" font-family="Liberation Mono">== descriptor.getDependencyType()) {</text>
<text x="1737" y="624" fill="#8ea3be" font-style="italic" font-family="Liberation Mono">descriptor: &quot;field &#x27;user&#x27;&quot;</text>
<text x="730" y="676" fill="#cc7832" font-family="Liberation Mono">return</text>
<text x="863" y="676" fill="#a9b7c6" font-family="Liberation Mono">createOptionalDependency(descriptor</text>
<text x="1528" y="676" fill="#cc7832" font-family="Liberation Mono">,</text>
<text x="1566" y="676" fill="#a9b7c6" font-family="Liberation Mono">requestingBeanName)</text>
<text x="1927" y="676" fill="#cc7832" font-family="Liberation Mono">;</text>
<text x="654" y="728" fill="#a9b7c6" font-family="Liberation Mono">}</text>
<text x="654" y="780" fill="#cc7832" font-family="Liberation Mono">else if</text>
<text x="806" y="780" fill="#a9b7c6" font-family="Liberation Mono">(ObjectFactory.</text>
<text x="1091" y="780" fill="#cc7832" font-family="Liberation Mono">class</text>
<text x="1205" y="780" fill="#a9b7c6" font-family="Liberation Mono">== descriptor.getDependencyType() ||</text>
<text x="806" y="832" fill="#a9b7c6" font-family="Liberation Mono">ObjectProvider.</text>
<text x="1091" y="832" fill="#cc7832" font-family="Liberation Mono">class</text>
<text x="1205" y="832" fill="#a9b7c6" font-family="Liberation Mono">== descriptor.getDependencyType()) {</text>
<text x="730" y="884" fill="#cc7832" font-family="Liberation Mono">return new</text>
<text x="939" y="884" fill="#a9b7c6" font-family="Liberation Mono">DependencyObjectProvider(descriptor</text>
<text x="1604" y="884" fill="#cc7832" font-family="Liberation Mono">,</text>
<text x="1642" y="884" fill="#a9b7c6" font-family="Liberation Mono">requestingBeanName)</text>
<text x="2003" y="884" fill="#cc7832" font-family="Liberation Mono">;</text>
<text x="654" y="936" fill="#a9b7c6" font-family="Liberation Mono">}</text>
<text x="654" y="988" fill="#cc7832" font-family="Liberation Mono">else if</text>
<text x="806" y="988" fill="#a9b7c6" font-family="Liberation Mono">(</text>
<text x="825" y="988" fill="#9876aa" font-style="italic" font-family="Liberation Mono">javaxInjectProviderClass</text>
<text x="1300" y="988" fill="#a9b7c6" font-family="Liberation Mono">== descriptor.getDependencyType()) {</text>
<text x="730" y="1040" fill="#cc7832" font-family="Liberation Mono">return new</text>
<text x="939" y="1040" fill="#a9b7c6" font-family="Liberation Mono">Jsr330Factory().createDependencyProvider(descriptor</text>
<text x="1908" y="1040" fill="#cc7832" font-family="Liberation Mono">,</text>
<text x="1946" y="1040" fill="#a9b7c6" font-family="Liberation Mono">requestingBeanName)</text>
<text x="2307" y="1040" fill="#cc7832" font-family="Liberation Mono">;</text>
<text x="654" y="1092" fill="#a9b7c6" font-family="Liberation Mono">}</text>
<text x="654" y="1144" fill="#cc7832" font-family="Liberation Mono">else</text>
<text x="749" y="1144" fill="#a9b7c6" font-family="Liberation Mono">{</text>
<text x="730" y="1196" fill="#a9b7c6" font-family="Liberation Mono">return doResolveDependency(descriptor, requestingBeanName, autowiredBeanNames, typeConverter);</text>
</g>
<rect x="503" y="1154" width="1378" height="15" fill="#4d4d4d" />
<rect x="2822" y="713" width="16" height="69" fill="#4a4a4a" />
<rect x="2812" y="750" width="28" height="3" fill="#7a4a3a" />
<circle cx="2826" cy="184" r="10" fill="#b33232"/><rect x="2824" y="177" width="4" height="8" fill="#2b2b2b"/><rect x="2824" y="187" width="4" height="4" fill="#2b2b2b"/>
<rect x="2812" y="205" width="28" height="4" fill="#bc3f3c" />
<rect x="2812" y="1143" width="28" height="4" fill="#bc3f3c" />
<rect x="2840" y="116" width="2" height="1504" fill="#2b2b2b" />
<rect x="2842" y="116" width="38" height="1504" fill="#3c3f41" />
<text x="2850" y="157" font-size="26" font-weight="bold" font-style="italic" fill="#afb1b3" textLength="26" lengthAdjust="spacingAndGlyphs">m</text>
<text x="0" y="0" font-size="26" fill="#bbbbbb" textLength="69" lengthAdjust="spacingAndGlyphs" transform="translate(2851,172) rotate(90)">Maven</text>
<circle cx="2863" cy="297" r="11" fill="#afb1b3"/><path d="M2856,292 q4,-3 7,1 q3,4 -1,8 M2866,288 q4,2 3,7" fill="none" stroke="#3c3f41" stroke-width="2.5"/>
<text x="0" y="0" font-size="26" fill="#bbbbbb" textLength="116" lengthAdjust="spacingAndGlyphs" transform="translate(2851,320) rotate(90)">RestfulTool</text>
<g fill="#afb1b3"><ellipse cx="2863" cy="484" rx="11" ry="4"/><rect x="2852" y="486" width="22" height="4"/><rect x="2852" y="492" width="22" height="4"/><rect x="2852" y="498" width="22" height="5" rx="3"/></g>
<text x="0" y="0" font-size="26" fill="#bbbbbb" textLength="95" lengthAdjust="spacingAndGlyphs" transform="translate(2851,515) rotate(90)">Database</text>
<g fill="#afb1b3"><circle cx="2863" cy="656" r="5"/><ellipse cx="2863" cy="667" rx="6" ry="8"/><path d="M2852,652 L2874,680 M2874,652 L2852,680 M2851,666 H2875" stroke="#afb1b3" stroke-width="2"/></g>
<text x="0" y="0" font-size="26" fill="#bbbbbb" textLength="38" lengthAdjust="spacingAndGlyphs" transform="translate(2851,684) rotate(90)">Ant</text>
<path d="M554,383 L580,190" stroke="#f03333" stroke-width="3"/><polygon points="573,198 583,166 591,200" fill="#f03333"/>
<path d="M850,230 L946,366" stroke="#f03333" stroke-width="3"/><polygon points="936,370 954,378 948,360" fill="#f03333"/>
<rect x="44" y="1170" width="2796" height="4" fill="#303030" />
<rect x="44" y="1174" width="2796" height="52" fill="#3b4754" />
<text x="57" y="1210" font-size="26" fill="#bbbbbb" textLength="82" lengthAdjust="spacingAndGlyphs" >Debug:</text>
<rect x="186" y="1187" width="23" height="20" fill="none" stroke="#7f8a94" stroke-width="2"/><rect x="181" y="1193" width="24" height="20" fill="#3b4754" stroke="#8a949c" stroke-width="2"/><rect x="184" y="1196" width="18" height="14" fill="#3f87a3"/><circle cx="206" cy="1212" r="4" fill="#29e02a"/>
<text x="219" y="1210" font-size="26" fill="#bbbbbb" textLength="496" lengthAdjust="spacingAndGlyphs" >AnnotationDependencyInjectionResolutio...</text>
<path d="M731,1195 L745,1209 M745,1195 L731,1209" stroke="#7a848c" stroke-width="2.2"/>
<rect x="44" y="1226" width="2796" height="2" fill="#2b2b2b" />
<rect x="154" y="1222" width="614" height="6" fill="#4a88c7" />
<polygon points="2759.2,1190.5 2759.3,1187.3 2764.7,1187.3 2764.8,1190.5 2766.0,1191.0 2766.9,1191.4 2767.8,1192.0 2768.8,1192.9 2771.7,1191.3 2774.4,1196.0 2771.6,1197.6 2771.8,1199.0 2771.9,1200.0 2771.8,1201.0 2771.6,1202.4 2774.4,1204.0 2771.7,1208.7 2768.8,1207.1 2767.8,1208.0 2766.9,1208.6 2766.0,1209.0 2764.8,1209.5 2764.7,1212.7 2759.3,1212.7 2759.2,1209.5 2758.0,1209.0 2757.1,1208.6 2756.2,1208.0 2755.2,1207.1 2752.3,1208.7 2749.6,1204.0 2752.4,1202.4 2752.2,1201.0 2752.1,1200.0 2752.2,1199.0 2752.4,1197.6 2749.6,1196.0 2752.3,1191.3 2755.2,1192.9 2756.2,1192.0 2757.1,1191.4 2758.0,1191.0" fill="#afb1b3"/><circle cx="2762" cy="1200" r="4.7" fill="#3b4754"/>
<rect x="2802" y="1198" width="24" height="4" fill="#afb1b3" />
<rect x="100" y="1229" width="2" height="391" fill="#2b2b2b" />
<path d="M78,1250 H73 A9.5,9.5 0 0 0 73,1269 H74" fill="none" stroke="#499c54" stroke-width="4"/><polygon points="76,1242 87,1250 76,1258" fill="#499c54"/><rect x="74" y="1260" width="10" height="10" fill="#afb1b3"/>
<rect x="52" y="1289" width="40" height="2" fill="#4b4d4f" />
<rect x="62" y="1309" width="5" height="23" fill="#499c54"/><polygon points="70,1309 86,1320.5 70,1332" fill="#499c54"/>
<rect x="64" y="1362" width="5" height="22" fill="#5a5d5f"/><rect x="74" y="1362" width="5" height="22" fill="#5a5d5f"/>
<rect x="62" y="1416" width="20" height="20" fill="#c75450" />
<rect x="52" y="1459" width="40" height="2" fill="#4b4d4f" />
<circle cx="79" cy="1484" r="9" fill="#c75450"/><circle cx="70" cy="1495" r="9" fill="#c75450" stroke="#3c3f41" stroke-width="2"/>
<circle cx="74" cy="1544" r="11" fill="#c75450"/><path d="M60,1558 L88,1530" stroke="#3c3f41" stroke-width="4"/><path d="M62,1556 L86,1532" stroke="#afb1b3" stroke-width="2"/>
<rect x="52" y="1576" width="40" height="2" fill="#4b4d4f" />
<path d="M66,1596 L71.5,1601 L66,1606 M74,1596 L79.5,1601 L74,1606" fill="none" stroke="#afb1b3" stroke-width="2.2"/>
<text x="128.7" y="1264" font-size="26" fill="#bbbbbb" textLength="104.3" lengthAdjust="spacingAndGlyphs" >Debugger</text>
<rect x="102" y="1279" width="158" height="4" fill="#4a88c7" />
<rect x="286" y="1246" width="24" height="20" fill="#afb1b3"/><path d="M295,1250 L301,1256 L295,1262" fill="none" stroke="#3c3f41" stroke-width="2.5"/>
<text x="322" y="1264" font-size="26" fill="#bbbbbb" textLength="85" lengthAdjust="spacingAndGlyphs" >Console</text>
<rect x="437" y="1244" width="25" height="4" fill="#afb1b3"/><rect x="437" y="1252" width="25" height="5" fill="#3592c4"/><rect x="437" y="1261" width="25" height="4" fill="#afb1b3"/>
<rect x="482" y="1234" width="2" height="40" fill="#4b4d4f" />
<path d="M504,1255 L514.8,1244 L523,1252" fill="none" stroke="#3592c4" stroke-width="3.6"/><polygon points="515.5,1258 528,1258 528,1246" fill="#3592c4"/><rect x="504" y="1262" width="24" height="4" fill="#afb1b3"/>
<rect x="565.7" y="1240" width="4" height="12" fill="#3592c4"/><polygon points="558.7,1250.4 577,1250.4 567.8,1259" fill="#3592c4"/><rect x="556" y="1262" width="24" height="4" fill="#afb1b3"/>
<rect x="617.7" y="1240" width="4" height="12" fill="#c9504c"/><polygon points="610.5,1250.4 629,1250.4 619.7,1259" fill="#c9504c"/><rect x="608" y="1262" width="24" height="4" fill="#afb1b3"/>
<rect x="670" y="1250" width="4" height="10" fill="#3592c4"/><polygon points="663,1250.4 681,1250.4 672,1241" fill="#3592c4"/><rect x="660" y="1262" width="24" height="4" fill="#afb1b3"/>
<path d="M712,1243 L723,1254 M723,1243 L712,1254" stroke="#c9504c" stroke-width="3.6"/><path d="M726,1250 H734 V1264 H720 V1256" fill="none" stroke="#afb1b3" stroke-width="3.8"/>
<path d="M764.5,1243.5 L773,1252" stroke="#3592c4" stroke-width="4"/><polygon points="766,1256 778,1256 778,1244" fill="#3592c4"/><path d="M780,1252 H790 M785,1252 V1268 M780,1268 H790" stroke="#afb1b3" stroke-width="2.2"/>
<rect x="808" y="1234" width="2" height="40" fill="#4b4d4f" />
<rect x="830" y="1242" width="24" height="24" fill="#afb1b3"/><g fill="#3c3f41"><rect x="834" y="1246" width="16" height="4"/><rect x="834" y="1252" width="4" height="4"/><rect x="840" y="1252" width="4" height="4"/><rect x="846" y="1252" width="4" height="4"/><rect x="834" y="1258" width="4" height="4"/><rect x="840" y="1258" width="4" height="4"/><rect x="846" y="1258" width="4" height="4"/></g>
<g fill="#56595b"><rect x="882" y="1244" width="10" height="3.6"/><rect x="895" y="1244" width="11" height="3.6"/><rect x="882" y="1251.5" width="8" height="3.6"/><rect x="897" y="1251.5" width="9" height="3.6"/><rect x="882" y="1260" width="6" height="3.6"/><rect x="893" y="1260" width="13" height="3.6"/></g><path d="M887,1266 L897,1242" stroke="#56595b" stroke-width="2.5"/>
<rect x="2800" y="1244" width="14" height="10" fill="#afb1b3"/><rect x="2816" y="1244" width="8" height="10" fill="#afb1b3"/><rect x="2800" y="1256" width="24" height="8" fill="#afb1b3"/><polygon points="2818,1266 2830,1266 2824,1272" fill="#d0d0d0"/>
<rect x="102" y="1282" width="2738" height="2" fill="#2b2b2b" />
<text x="129" y="1318" font-size="26" fill="#bbbbbb" textLength="73" lengthAdjust="spacingAndGlyphs" >Frames</text>
<rect x="543" y="1285" width="2" height="335" fill="#2b2b2b" />
<text x="572" y="1318" font-size="26" fill="#bbbbbb" textLength="94" lengthAdjust="spacingAndGlyphs" >Variables</text>
<rect x="102" y="1335" width="2738" height="2" fill="#2b2b2b" />
<rect x="110" y="1345" width="263" height="46" rx="5" fill="#3c3f41" stroke="#5e6060" stroke-width="2"/>
<path d="M126,1366 L135,1375 L151,1356" fill="none" stroke="#d35d2d" stroke-width="4.5"/>
<text x="162" y="1378" font-size="26" fill="#bbbbbb" textLength="152.5" lengthAdjust="spacingAndGlyphs" >&quot;mai...NNING</text>
<polygon points="342,1364 359,1364 350.5,1374" fill="#afb1b3"/>
<path d="M409,1358 V1381 M400,1366 L409,1357 L418,1366" fill="none" stroke="#5a5d5f" stroke-width="3"/>
<path d="M462,1356 V1379 M453,1370 L462,1379 L471,1370" fill="none" stroke="#afb1b3" stroke-width="3"/>
<polygon points="502,1356 527,1356 517,1368 517,1381 512,1379 512,1368" fill="#afb1b3"/>
<rect x="102" y="1401" width="441" height="219" fill="#4f4b41" />
<rect x="102" y="1401" width="441" height="42" fill="#4b6eaf" />
<defs><clipPath id="frclip"><rect x="102" y="1401" width="441" height="219"/></clipPath></defs><g clip-path="url(#frclip)">
<text x="134" y="1432" font-size="26" fill="#dedede" >resolveDependency:1193, DefaultListableBeanFactory (org.springframework.beans.factory.support)</text>
<text x="134" y="1474" font-size="26" fill="#8d8d8d" >inject:640, AutowiredAnnotationBeanPostProcessor$AutowiredFieldElement</text>
<text x="134" y="1516" font-size="26" fill="#8d8d8d" >inject:116, InjectionMetadata</text>
<text x="134" y="1558" font-size="26" fill="#8d8d8d" >postProcessProperties:399, AutowiredAnnotationBeanPostProcessor</text>
<text x="134" y="1600" font-size="26" fill="#8d8d8d" >populateBean:1422, AbstractAutowireCapableBeanFactory</text>
<text x="470.171875" y="1516" font-size="26" fill="#8d8d8d" font-style="italic" >(org.springframework.beans.factory.annotation)</text>
</g>
<rect x="525" y="1402" width="16" height="64" fill="#ffffff" opacity="0.2"/>
<rect x="104" y="1602" width="118" height="16" fill="#ffffff" opacity="0.16"/>
<rect x="595" y="1337" width="2" height="283" fill="#2b2b2b" />
<rect x="559" y="1362" width="22" height="4" fill="#afb1b3"/><rect x="568" y="1353" width="4" height="22" fill="#afb1b3"/>
<rect x="559" y="1414" width="22" height="4" fill="#5a5d5f" />
<polygon points="559,1475 581,1475 570,1463" fill="#5a5d5f"/><polygon points="559,1513 581,1513 570,1525" fill="#5a5d5f"/>
<path d="M563,1600 L568.5,1605.5 L563,1611 M571,1600 L576.5,1605.5 L571,1611" fill="none" stroke="#afb1b3" stroke-width="2.2"/>
<polygon points="603,1349 617,1358 603,1367" fill="#afb1b3"/>
<g fill="#ae8336"><rect x="642" y="1344" width="20" height="6"/><rect x="642" y="1353" width="20" height="6"/><rect x="642" y="1362" width="20" height="6"/></g>
<text x="675" y="1367" font-size="26" fill="#f08a86" textLength="40" lengthAdjust="spacingAndGlyphs" >this</text>
<text x="722" y="1367" font-size="26" fill="#bbbbbb" >=</text>
<text x="746" y="1367" font-size="26" fill="#8d8d8d" textLength="407" lengthAdjust="spacingAndGlyphs" >{DefaultListableBeanFactory@1607}</text>
<text x="1163" y="1367" font-size="26" fill="#bbbbbb" textLength="1607" lengthAdjust="spacingAndGlyphs" >&quot;org.springframework.beans.factory.support.DefaultListableBeanFactory@1b7cc17c: defining beans [org.springframework.context.annotatic...</text>
<text x="2779" y="1367" font-size="26" fill="#5a87c6" textLength="54.6" lengthAdjust="spacingAndGlyphs" >View</text>
<polygon points="603,1389 617,1398 603,1407" fill="#afb1b3"/>
<circle cx="652" cy="1398" r="14" fill="#ae8336"/><text x="645" y="1405" font-size="22" fill="#3c3320">p</text>
<text x="675" y="1407" font-size="26" fill="#f08a86" textLength="113" lengthAdjust="spacingAndGlyphs" >descriptor</text>
<text x="799" y="1407" font-size="26" fill="#bbbbbb" >=</text>
<text x="821" y="1407" font-size="26" fill="#8d8d8d" textLength="360" lengthAdjust="spacingAndGlyphs" >{DependencyDescriptor@2311}</text>
<text x="1189.5" y="1407" font-size="26" fill="#bbbbbb" textLength="133.5" lengthAdjust="spacingAndGlyphs" >&quot;field &#x27;user&#x27;&quot;</text>
<polygon points="603,1429 617,1438 603,1447" fill="#afb1b3"/>
<circle cx="652" cy="1438" r="14" fill="#ae8336"/><text x="645" y="1445" font-size="22" fill="#3c3320">p</text>
<text x="675" y="1447" font-size="26" fill="#f08a86" textLength="246.7" lengthAdjust="spacingAndGlyphs" >requestingBeanName</text>
<text x="933" y="1447" font-size="26" fill="#bbbbbb" >=</text>
<text x="957" y="1447" font-size="26" fill="#6a8759" textLength="577" lengthAdjust="spacingAndGlyphs" >&quot;annotationDependencyInjectionResolutionDemo&quot;</text>
<circle cx="652" cy="1478" r="14" fill="#ae8336"/><text x="645" y="1485" font-size="22" fill="#3c3320">p</text>
<text x="675" y="1487" font-size="26" fill="#f08a86" textLength="250" lengthAdjust="spacingAndGlyphs" >autowiredBeanNames</text>
<text x="937" y="1487" font-size="26" fill="#bbbbbb" >=</text>
<text x="959" y="1487" font-size="26" fill="#8d8d8d" textLength="265.6" lengthAdjust="spacingAndGlyphs" >{LinkedHashSet@2322}</text>
<text x="1239" y="1487" font-size="26" fill="#bbbbbb" textLength="88.7" lengthAdjust="spacingAndGlyphs" >size = 0</text>
<polygon points="603,1509 617,1518 603,1527" fill="#afb1b3"/>
<circle cx="652" cy="1518" r="14" fill="#ae8336"/><text x="645" y="1525" font-size="22" fill="#3c3320">p</text>
<text x="675" y="1527" font-size="26" fill="#f08a86" textLength="164.6" lengthAdjust="spacingAndGlyphs" >typeConverter</text>
<text x="851" y="1527" font-size="26" fill="#bbbbbb" >=</text>
<text x="871" y="1527" font-size="26" fill="#8d8d8d" textLength="343.5" lengthAdjust="spacingAndGlyphs" >{SimpleTypeConverter@2334}</text>
<circle cx="646" cy="1558" r="7" fill="none" stroke="#9aa7b0" stroke-width="3"/><circle cx="662" cy="1558" r="7" fill="none" stroke="#9aa7b0" stroke-width="3"/>
<text x="675" y="1567" font-size="26" fill="#f08a86" textLength="271.7" lengthAdjust="spacingAndGlyphs" >javaxInjectProviderClass</text>
<text x="958" y="1567" font-size="26" fill="#bbbbbb" >=</text>
<text x="979.6" y="1567" font-size="26" fill="#bbbbbb" textLength="40.4" lengthAdjust="spacingAndGlyphs" >null</text>
<rect x="597" y="1602" width="695" height="15" fill="#5b5d5f" />
<rect x="0" y="1620" width="2880" height="2" fill="#2b2b2b" />
<rect x="170" y="1622" width="171" height="42" fill="#2b2d2f" />
<rect x="66" y="1634" width="4.5" height="22" fill="#afb1b3"/><path d="M68,1645.5 H80.5 V1639" fill="none" stroke="#afb1b3" stroke-width="4.5"/><polygon points="73,1642 80.5,1633.5 88,1642" fill="#afb1b3"/>
<text x="96" y="1653" font-size="26" fill="#bbbbbb" textLength="55" lengthAdjust="spacingAndGlyphs" >9: Git</text>
<rect x="96" y="1656" width="13" height="2" fill="#bbbbbb" />
<g fill="#afb1b3"><ellipse cx="205" cy="1647" rx="9.5" ry="10"/><rect x="194.5" y="1641" width="21" height="2.5"/><rect x="194.5" y="1647" width="21" height="2.5"/><rect x="194.5" y="1653" width="21" height="2.5"/></g><path d="M199,1633 L203,1638 M211,1633 L207,1638" stroke="#afb1b3" stroke-width="2.5"/><circle cx="214.5" cy="1654" r="4.5" fill="#20e020" stroke="#2b2b2b" stroke-width="1"/>
<text x="226" y="1653" font-size="26" fill="#dddddd" textLength="95" lengthAdjust="spacingAndGlyphs" >5: Debug</text>
<rect x="226" y="1656" width="13" height="2" fill="#dddddd" />
<g fill="#afb1b3"><rect x="368" y="1634" width="4" height="4"/><rect x="368" y="1642" width="4" height="4"/><rect x="368" y="1650" width="4" height="4"/><rect x="375" y="1634" width="13" height="4"/><rect x="375" y="1642" width="13" height="4"/><rect x="375" y="1650" width="13" height="4"/></g>
<text x="398" y="1653" font-size="26" fill="#bbbbbb" textLength="89.5" lengthAdjust="spacingAndGlyphs" >6: TODO</text>
<rect x="398" y="1656" width="13" height="2" fill="#bbbbbb" />
<path d="M532,1654 Q534,1634 555,1634 Q554,1654 534,1654 Z" fill="#afb1b3"/><path d="M532,1656 L548,1640" stroke="#3c3f41" stroke-width="2"/>
<text x="565" y="1653" font-size="26" fill="#bbbbbb" textLength="67" lengthAdjust="spacingAndGlyphs" >Spring</text>
<rect x="677" y="1634" width="22" height="19" fill="#afb1b3"/><path d="M681,1638 L687,1643 L681,1648 M688,1649 H695" fill="none" stroke="#3c3f41" stroke-width="2"/>
<text x="711" y="1653" font-size="26" fill="#bbbbbb" textLength="90" lengthAdjust="spacingAndGlyphs" >Terminal</text>
<circle cx="2695" cy="1646" r="10.5" fill="none" stroke="#afb1b3" stroke-width="3"/>
<text x="2716" y="1655" font-size="26" fill="#bbbbbb" textLength="103" lengthAdjust="spacingAndGlyphs" >Event Log</text>
<rect x="0" y="1664" width="2880" height="2" fill="#47484a" />
<rect x="19.5" y="1675.5" width="16" height="14.5" fill="none" stroke="#afb1b3" stroke-width="2.2"/><path d="M13.5,1681 V1697 H32" fill="none" stroke="#afb1b3" stroke-width="2.2"/>
<text x="54.5" y="1694" font-size="26" fill="#bbbbbb" textLength="454.5" lengthAdjust="spacingAndGlyphs" >All files are up-to-date (20 minutes ago)</text>
<text x="2336.6" y="1694" font-size="26" fill="#bbbbbb" textLength="73.5" lengthAdjust="spacingAndGlyphs" >1193:1</text>
<text x="2437" y="1694" font-size="26" fill="#8d8d8d" textLength="22.5" lengthAdjust="spacingAndGlyphs" >LF</text>
<text x="2487.5" y="1694" font-size="26" fill="#8d8d8d" >UTF-8</text>
<rect x="2575" y="1653" width="310" height="51" rx="6" fill="#ffffff" stroke="#b8c8dc" stroke-width="1.5"/>
<g transform="translate(2556,1674) rotate(-18)"><rect x="-27" y="-27" width="54" height="54" rx="9" fill="#f25c22"/><text x="-17" y="17" font-size="48" font-weight="bold" font-style="italic" fill="#ffffff" textLength="34" lengthAdjust="spacingAndGlyphs">S</text></g>
<text x="2601" y="1690" font-size="30" fill="#0a6fd6" textLength="27" lengthAdjust="spacingAndGlyphs" font-weight="bold" >中</text>
<circle cx="2656" cy="1672" r="3.5" fill="#0a6fd6"/><circle cx="2671" cy="1679" r="3.5" fill="#0a6fd6"/>
<rect x="2705" y="1663" width="11" height="19" rx="5.5" fill="#0a6fd6"/><path d="M2700,1676 q10.5,18 21,0 M2710.5,1686 V1693" fill="none" stroke="#0a6fd6" stroke-width="3"/>
<rect x="2745" y="1667" width="29" height="22" rx="3" fill="#0a6fd6"/><g fill="#ffffff"><rect x="2749" y="1671" width="4" height="4"/><rect x="2755" y="1671" width="4" height="4"/><rect x="2761" y="1671" width="4" height="4"/><rect x="2767" y="1671" width="4" height="4"/><rect x="2749" y="1677" width="4" height="4"/><rect x="2755" y="1677" width="4" height="4"/><rect x="2761" y="1677" width="4" height="4"/><rect x="2767" y="1677" width="4" height="4"/></g>
<path d="M2793,1668 L2802,1664.5 Q2807.5,1670 2813,1664.5 L2822,1668 L2820,1678 H2815 V1692 H2800 V1678 H2795 Z" fill="#0a6fd6"/>
<g><rect x="2842" y="1666" width="12" height="12" rx="3" fill="#8a6cf0"/><rect x="2856" y="1666" width="12" height="12" rx="3" fill="#6a78f6"/><rect x="2859" y="1669" width="6" height="6" fill="#ffffff"/><rect x="2842" y="1680" width="12" height="12" rx="3" fill="#d04a8a"/><rect x="2856" y="1680" width="12" height="12" rx="3" fill="#6a6cf0"/></g>
<text x="2655" y="1694" font-size="24" fill="#808080" textLength="209" lengthAdjust="spacingAndGlyphs" opacity="0.85">CSDN @只因为你而温柔</text>
</svg></body></html>
